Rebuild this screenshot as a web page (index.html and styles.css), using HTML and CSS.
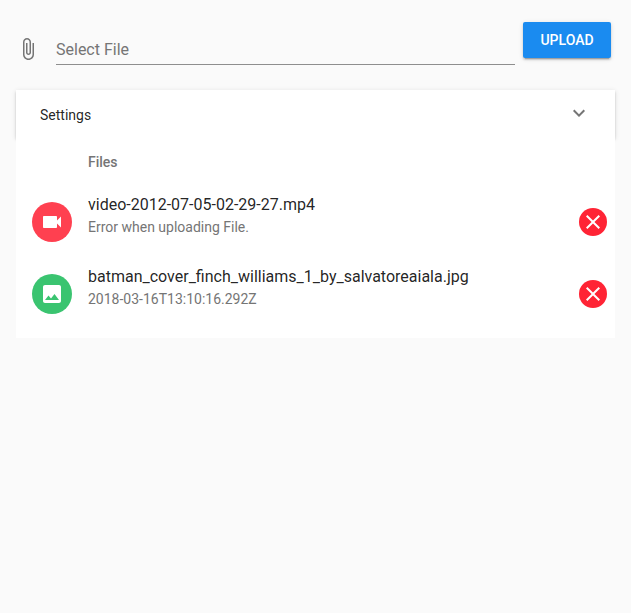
FILE: index.html
```html
<!DOCTYPE html>
<html lang="en">
<head>
<meta charset="utf-8">
<title>File upload</title>
<link rel="stylesheet" href="styles.css">
</head>
<body>
<main class="page">
  <div class="upload-bar">
    <svg class="icon attach" viewBox="0 0 24 24"><path d="M16.5 6v11.5c0 2.21-1.79 4-4 4s-4-1.79-4-4V5c0-1.38 1.12-2.5 2.5-2.5s2.5 1.12 2.5 2.5v10.5c0 .55-.45 1-1 1s-1-.45-1-1V6H10v9.5c0 1.38 1.12 2.5 2.5 2.5s2.5-1.12 2.5-2.5V5c0-2.21-1.79-4-4-4S7 2.79 7 5v12.5c0 3.04 2.46 5.5 5.5 5.5s5.5-2.46 5.5-5.5V6h-1.5z"/></svg>
    <div class="field">Select File</div>
    <button class="upload-button" type="button">UPLOAD</button>
  </div>
  <section class="settings">
    <span>Settings</span>
    <svg class="icon" viewBox="0 0 24 24"><path d="M7.41 8.59L12 13.17l4.59-4.58L18 10l-6 6-6-6z"/></svg>
  </section>
  <section class="files">
    <h2 class="subheader">Files</h2>
    <div class="file">
      <span class="avatar video"><svg class="icon" viewBox="0 0 24 24"><path d="M17 10.5V7c0-.55-.45-1-1-1H4c-.55 0-1 .45-1 1v10c0 .55.45 1 1 1h12c.55 0 1-.45 1-1v-3.5l4 4v-11l-4 4z"/></svg></span>
      <div class="details">
        <div class="name">video-2012-07-05-02-29-27.mp4</div>
        <div class="status">Error when uploading File.</div>
      </div>
      <button class="remove" type="button" aria-label="Remove"><svg class="icon" viewBox="0 0 24 24"><path d="M19 6.41L17.59 5 12 10.59 6.41 5 5 6.41 10.59 12 5 17.59 6.41 19 12 13.41 17.59 19 19 17.59 13.41 12z"/></svg></button>
    </div>
    <div class="file">
      <span class="avatar image"><svg class="icon" viewBox="0 0 24 24"><path d="M21 19V5c0-1.1-.9-2-2-2H5c-1.1 0-2 .9-2 2v14c0 1.1.9 2 2 2h14c1.1 0 2-.9 2-2zM8.5 13.5l2.5 3.01L14.5 12l4.5 6H5l3.5-4.5z"/></svg></span>
      <div class="details">
        <div class="name">batman_cover_finch_williams_1_by_salvatoreaiala.jpg</div>
        <div class="status">2018-03-16T13:10:16.292Z</div>
      </div>
      <button class="remove" type="button" aria-label="Remove"><svg class="icon" viewBox="0 0 24 24"><path d="M19 6.41L17.59 5 12 10.59 6.41 5 5 6.41 10.59 12 5 17.59 6.41 19 12 13.41 17.59 19 19 17.59 13.41 12z"/></svg></button>
    </div>
  </section>
</main>
</body>
</html>
```
FILE: styles.css
```css
* {
  box-sizing: border-box;
}

body {
  margin: 0;
  background: #fafafa;
  color: rgba(0, 0, 0, 0.87);
  font-family: Roboto, sans-serif;
  font-size: 14px;
}

.page {
  padding: 22px 16px 0;
}

.icon {
  display: block;
  flex: none;
  width: 24px;
  height: 24px;
  fill: #757575;
}

.upload-bar {
  display: flex;
  align-items: flex-start;
  height: 68px;
  padding-right: 4px;
}

.attach {
  margin-top: 15px;
}

.field {
  flex: 1;
  height: 43px;
  margin: 0 8px 0 16px;
  padding-top: 18px;
  border-bottom: 1px solid #8e8e8e;
  color: #757575;
  font-size: 16px;
  line-height: 20px;
}

.upload-button {
  width: 88px;
  height: 36px;
  padding: 0;
  border: 0;
  border-radius: 2px;
  background: #1a8bf0;
  box-shadow: 0 3px 1px -2px rgba(0, 0, 0, 0.2), 0 2px 2px rgba(0, 0, 0, 0.14), 0 1px 5px rgba(0, 0, 0, 0.12);
  color: #fff;
  font: 500 14px/36px Roboto, sans-serif;
}

.settings {
  display: flex;
  justify-content: space-between;
  height: 48px;
  padding: 11px 24px 0;
  background: #fff;
  box-shadow: 0 3px 1px -2px rgba(0, 0, 0, 0.2), 0 2px 2px rgba(0, 0, 0, 0.14), 0 1px 5px rgba(0, 0, 0, 0.12);
  line-height: 28px;
}

.files {
  position: relative;
  height: 200px;
  padding-top: 2px;
  background: #fff;
}

.subheader {
  height: 44px;
  margin: 0;
  padding-left: 72px;
  color: #757575;
  font-size: 14px;
  font-weight: 500;
  line-height: 44px;
}

.file {
  display: flex;
  align-items: center;
  height: 72px;
  padding: 4px 8px 0 16px;
}

.avatar {
  display: grid;
  place-items: center;
  width: 40px;
  height: 40px;
  border-radius: 50%;
}

.avatar .icon,
.remove .icon {
  fill: #fff;
}

.video {
  background: #ff4050;
}

.image {
  background: #3ac470;
}

.details {
  flex: 1;
  padding: 0 0 14px 16px;
}

.name {
  font-size: 16px;
  line-height: 24px;
}

.status {
  color: #757575;
  line-height: 21px;
}

.remove {
  display: grid;
  place-items: center;
  width: 28px;
  height: 28px;
  padding: 0;
  border: 0;
  border-radius: 50%;
  background: #ff2435;
}
```
